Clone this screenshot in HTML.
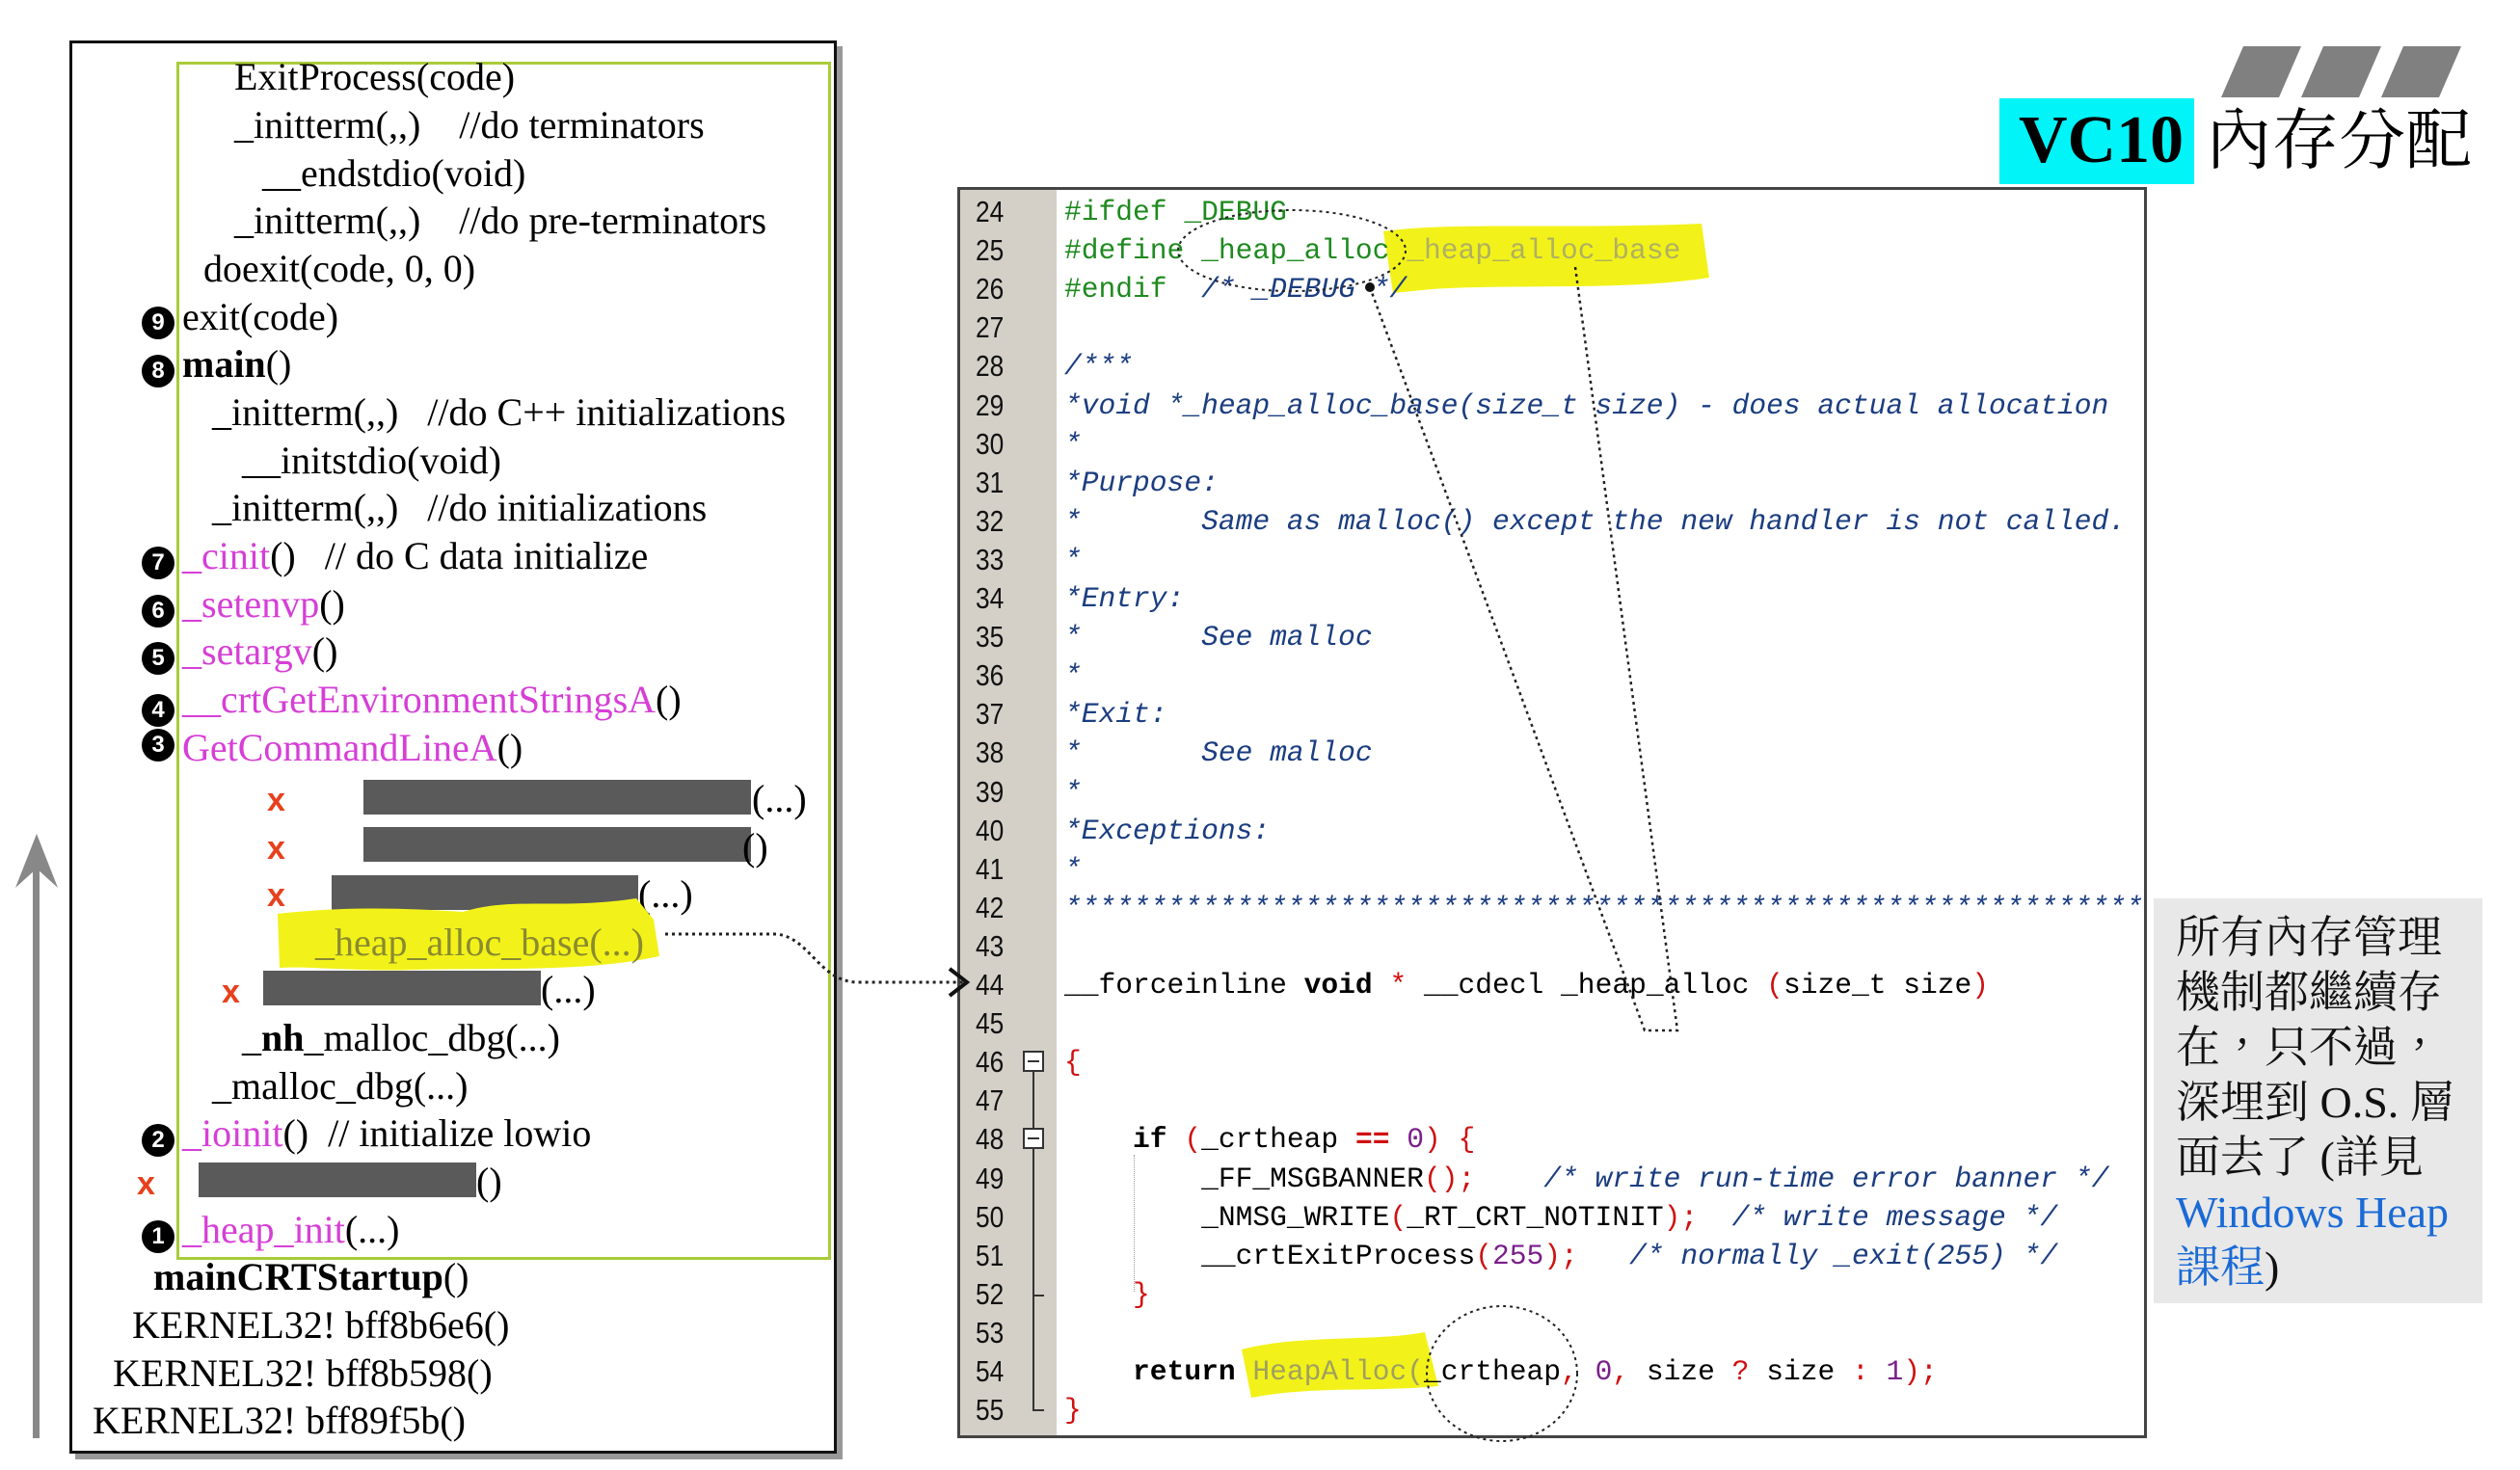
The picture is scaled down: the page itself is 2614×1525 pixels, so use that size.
<!DOCTYPE html>
<html><head><meta charset="utf-8">
<style>
*{margin:0;padding:0;box-sizing:border-box}
body{width:2614px;height:1525px;background:#fff;position:relative;overflow:hidden;font-family:"Liberation Serif","Noto Serif CJK SC",serif}
.a{position:absolute;white-space:pre}
.t{position:absolute;white-space:pre;font-size:40px;line-height:50px;color:#000}
.m{color:#d63fd6}
.c{position:absolute;width:34px;height:34px;border-radius:50%;background:#000;color:#fff;font:bold 24px/34px "Liberation Sans",sans-serif;text-align:center}
.x{position:absolute;color:#e8401c;font:bold 34px/40px "Liberation Sans",sans-serif}
.bar{position:absolute;height:36px;background:#5a5a5a}
.ln{position:absolute;left:1012px;font:31px/40px "Liberation Sans",sans-serif;color:#111;transform:scaleX(.85);transform-origin:left}
.cd{position:absolute;left:1104px;font:29.6px/40px "Liberation Mono",monospace;white-space:pre;color:#000}
.g{color:#1f8a1f}.cm{color:#1b3d80;font-style:italic}.r{color:#d01010}.p{color:#7a1f8a}.b{font-weight:bold}
</style></head><body>

<div class="a" style="left:78px;top:48px;width:796px;height:1466px;background:#999"></div>
<div class="a" style="left:72px;top:42px;width:796px;height:1466px;border:3px solid #111;background:#fff"></div>
<div class="a" style="left:183px;top:64px;width:679px;height:1243px;border:3px solid #a8cc3a"></div>

<div class="a" style="left:34px;top:895px;width:7px;height:597px;background:#888"></div>
<svg class="a" style="left:14px;top:865px" width="48" height="60"><polygon points="24,0 46,56 24,36 2,56" fill="#888"/></svg>

<div class="t" style="left:243px;top:55px">ExitProcess(code)</div>
<div class="t" style="left:243px;top:105px">_initterm(,,)    //do terminators</div>
<div class="t" style="left:272px;top:155px">__endstdio(void)</div>
<div class="t" style="left:243px;top:204px">_initterm(,,)    //do pre-terminators</div>
<div class="t" style="left:211px;top:254px">doexit(code, 0, 0)</div>
<div class="t" style="left:189px;top:304px">exit(code)</div>
<div class="t" style="left:189px;top:353px"><b>main</b>()</div>
<div class="t" style="left:220px;top:403px">_initterm(,,)   //do C++ initializations</div>
<div class="t" style="left:251px;top:453px">__initstdio(void)</div>
<div class="t" style="left:220px;top:502px">_initterm(,,)   //do initializations</div>
<div class="t" style="left:189px;top:552px"><span class="m">_cinit</span>()   // do C data initialize</div>
<div class="t" style="left:189px;top:602px"><span class="m">_setenvp</span>()</div>
<div class="t" style="left:189px;top:651px"><span class="m">_setargv</span>()</div>
<div class="t" style="left:189px;top:701px"><span class="m">__crtGetEnvironmentStringsA</span>()</div>
<div class="t" style="left:189px;top:751px"><span class="m">GetCommandLineA</span>()</div>

<div class="c" style="left:147px;top:318px">9</div>
<div class="c" style="left:147px;top:368px">8</div>
<div class="c" style="left:147px;top:567px">7</div>
<div class="c" style="left:147px;top:617px">6</div>
<div class="c" style="left:147px;top:666px">5</div>
<div class="c" style="left:147px;top:720px">4</div>
<div class="c" style="left:147px;top:756px">3</div>

<div class="x" style="left:277px;top:810px">x</div>
<div class="bar" style="left:377px;top:809px;width:402px"></div>
<div class="t" style="left:780px;top:804px">(...)</div>
<div class="x" style="left:277px;top:860px">x</div>
<div class="bar" style="left:377px;top:858px;width:402px"></div>
<div class="t" style="left:770px;top:854px">()</div>
<div class="x" style="left:277px;top:909px">x</div>
<div class="bar" style="left:344px;top:908px;width:318px"></div>
<div class="t" style="left:662px;top:903px">(...)</div>
<svg class="a" style="left:280px;top:920px" width="420" height="100"><path d="M8,28 C80,20 140,22 200,26 C250,10 300,24 380,12 L398,34 L404,72 C330,88 250,84 150,86 C90,88 40,82 10,84 Z" fill="#f2f21a"/></svg>
<div class="t" style="left:327px;top:953px;color:#8a8a30">_heap_alloc_base(...)</div>
<div class="x" style="left:230px;top:1009px">x</div>
<div class="bar" style="left:273px;top:1007px;width:288px"></div>
<div class="t" style="left:561px;top:1002px">(...)</div>
<div class="t" style="left:251px;top:1052px">_<b>nh</b>_malloc_dbg(...)</div>
<div class="t" style="left:220px;top:1102px">_malloc_dbg(...)</div>
<div class="t" style="left:189px;top:1151px"><span class="m">_ioinit</span>()  // initialize lowio</div>
<div class="c" style="left:147px;top:1166px">2</div>
<div class="x" style="left:142px;top:1208px">x</div>
<div class="bar" style="left:206px;top:1206px;width:288px"></div>
<div class="t" style="left:494px;top:1201px">()</div>
<div class="t" style="left:189px;top:1251px"><span class="m">_heap_init</span>(...)</div>
<div class="c" style="left:147px;top:1266px">1</div>
<div class="t" style="left:159px;top:1300px"><b>mainCRTStartup</b>()</div>
<div class="t" style="left:137px;top:1350px">KERNEL32! bff8b6e6()</div>
<div class="t" style="left:117px;top:1400px">KERNEL32! bff8b598()</div>
<div class="t" style="left:96px;top:1449px">KERNEL32! bff89f5b()</div>

<div class="a" style="left:993px;top:194px;width:1234px;height:1298px;border:3px solid #444;background:#fff"></div>
<div class="a" style="left:996px;top:197px;width:100px;height:1292px;background:#d4d0c8"></div>

<svg class="a" style="left:1425px;top:228px" width="360" height="82"><path d="M10,12 C80,2 200,10 340,4 L348,60 C260,74 150,66 60,72 L20,76 Z" fill="#f2f21a"/></svg>
<svg class="a" style="left:1268px;top:1378px" width="230" height="84"><path d="M20,22 C80,6 160,14 210,4 L224,60 C160,66 90,60 30,72 Z" fill="#f2f21a"/></svg>

<div class="ln" style="top:200px">24</div><div class="ln" style="top:240px">25</div><div class="ln" style="top:280px">26</div><div class="ln" style="top:320px">27</div>
<div class="ln" style="top:360px">28</div><div class="ln" style="top:401px">29</div><div class="ln" style="top:441px">30</div><div class="ln" style="top:481px">31</div>
<div class="ln" style="top:521px">32</div><div class="ln" style="top:561px">33</div><div class="ln" style="top:601px">34</div><div class="ln" style="top:641px">35</div>
<div class="ln" style="top:681px">36</div><div class="ln" style="top:721px">37</div><div class="ln" style="top:761px">38</div><div class="ln" style="top:802px">39</div>
<div class="ln" style="top:842px">40</div><div class="ln" style="top:882px">41</div><div class="ln" style="top:922px">42</div><div class="ln" style="top:962px">43</div>
<div class="ln" style="top:1002px">44</div><div class="ln" style="top:1042px">45</div><div class="ln" style="top:1082px">46</div><div class="ln" style="top:1122px">47</div>
<div class="ln" style="top:1162px">48</div><div class="ln" style="top:1203px">49</div><div class="ln" style="top:1243px">50</div><div class="ln" style="top:1283px">51</div>
<div class="ln" style="top:1323px">52</div><div class="ln" style="top:1363px">53</div><div class="ln" style="top:1403px">54</div><div class="ln" style="top:1443px">55</div>

<div class="a" style="left:1061px;top:1090px;width:22px;height:22px;border:2px solid #333;background:#fff"></div>
<div class="a" style="left:1066px;top:1100px;width:12px;height:2px;background:#333"></div>
<div class="a" style="left:1061px;top:1170px;width:22px;height:22px;border:2px solid #333;background:#fff"></div>
<div class="a" style="left:1066px;top:1180px;width:12px;height:2px;background:#333"></div>
<div class="a" style="left:1071px;top:1112px;width:2px;height:58px;background:#333"></div>
<div class="a" style="left:1071px;top:1192px;width:2px;height:272px;background:#333"></div>
<div class="a" style="left:1071px;top:1343px;width:12px;height:2px;background:#333"></div>
<div class="a" style="left:1071px;top:1462px;width:12px;height:2px;background:#333"></div>
<div class="a" style="left:1176px;top:1198px;width:0;height:142px;border-left:1px dotted #999"></div>

<div class="cd" style="top:200px"><span class="g">#ifdef _DEBUG</span></div>
<div class="cd" style="top:240px"><span class="g">#define _heap_alloc </span><span style="color:#b0b060">_heap_alloc_base</span></div>
<div class="cd" style="top:280px"><span class="g">#endif  </span><span class="cm">/* _DEBUG */</span></div>
<div class="cd cm" style="top:360px">/***</div>
<div class="cd cm" style="top:401px">*void *_heap_alloc_base(size_t size) - does actual allocation</div>
<div class="cd cm" style="top:441px">*</div>
<div class="cd cm" style="top:481px">*Purpose:</div>
<div class="cd cm" style="top:521px">*       Same as malloc() except the new handler is not called.</div>
<div class="cd cm" style="top:561px">*</div>
<div class="cd cm" style="top:601px">*Entry:</div>
<div class="cd cm" style="top:641px">*       See malloc</div>
<div class="cd cm" style="top:681px">*</div>
<div class="cd cm" style="top:721px">*Exit:</div>
<div class="cd cm" style="top:761px">*       See malloc</div>
<div class="cd cm" style="top:802px">*</div>
<div class="cd cm" style="top:842px">*Exceptions:</div>
<div class="cd cm" style="top:882px">*</div>
<div class="a" style="left:1104px;top:922px;width:1120px;height:40px;overflow:hidden"><div class="cd cm" style="left:0;top:0">*************************************************************************</div></div>
<div class="cd" style="top:1002px">__forceinline <b>void</b> <span class="r">*</span> __cdecl _heap_alloc <span class="r">(</span>size_t size<span class="r">)</span></div>
<div class="cd" style="top:1082px"><span class="r">{</span></div>
<div class="cd" style="top:1162px">    <b>if</b> <span class="r">(</span>_crtheap <span class="r b">==</span> <span class="p">0</span><span class="r">) {</span></div>
<div class="cd" style="top:1203px">        _FF_MSGBANNER<span class="r">();</span>    <span class="cm">/* write run-time error banner */</span></div>
<div class="cd" style="top:1243px">        _NMSG_WRITE<span class="r">(</span>_RT_CRT_NOTINIT<span class="r">);</span>  <span class="cm">/* write message */</span></div>
<div class="cd" style="top:1283px">        __crtExitProcess<span class="r">(</span><span class="p">255</span><span class="r">);</span>   <span class="cm">/* normally _exit(255) */</span></div>
<div class="cd" style="top:1323px">    <span class="r">}</span></div>
<div class="cd" style="top:1403px">    <b>return</b> <span style="color:#a0a060">HeapAlloc(</span>_crtheap<span class="r">,</span> <span class="p">0</span><span class="r">,</span> size <span class="r">?</span> size <span class="r">:</span> <span class="p">1</span><span class="r">);</span></div>
<div class="cd" style="top:1443px"><span class="r">}</span></div>

<svg class="a" style="left:0;top:0" width="2614" height="1525">
<g fill="none" stroke="#222" stroke-width="3" stroke-dasharray="3,4">
<ellipse cx="1340" cy="260" rx="118" ry="42" stroke-width="2"/>
<ellipse cx="1558" cy="1425" rx="78" ry="70" stroke-width="2"/>
<path d="M1421,298 L1706,1069 L1740,1069 L1634,277" stroke-width="2.5"/>
<path d="M690,969 L805,969 C840,972 850,1019 890,1019 L1000,1019"/>
</g>
<path d="M985,1005 L1003,1019 L985,1033" fill="none" stroke="#111" stroke-width="4"/>
<circle cx="1421" cy="298" r="5" fill="#111"/>
</svg>

<svg class="a" style="left:2290px;top:46px" width="280" height="58">
<polygon points="37,2 97,2 74,55 14,55" fill="#808080"/>
<polygon points="120,2 180,2 157,55 97,55" fill="#808080"/>
<polygon points="203,2 263,2 240,55 180,55" fill="#808080"/>
</svg>
<div class="a" style="left:2074px;top:102px;width:202px;height:89px;background:#00f4f8"></div>
<div class="a" style="left:2094px;top:100px;font:bold 70px/92px 'Liberation Serif',serif;color:#000">VC10</div>
<div class="a" style="left:2288px;top:98px;font:69px/96px 'Liberation Serif','Noto Serif CJK TC','Noto Serif CJK SC',serif;color:#000">內存分配</div>

<div class="a" style="left:2234px;top:932px;width:341px;height:420px;background:#e8e8e8"></div>
<div class="a" style="left:2257px;top:944px;width:320px;font:46px/57px 'Liberation Serif','Noto Serif CJK TC','Noto Serif CJK SC',serif;color:#111;white-space:normal">所有內存管理<br>機制都繼續存<br>在，只不過，<br>深埋到 O.S. 層<br>面去了 (詳見<br><span style="color:#1a6ad6">Windows Heap<br>課程</span>)</div>

</body></html>
